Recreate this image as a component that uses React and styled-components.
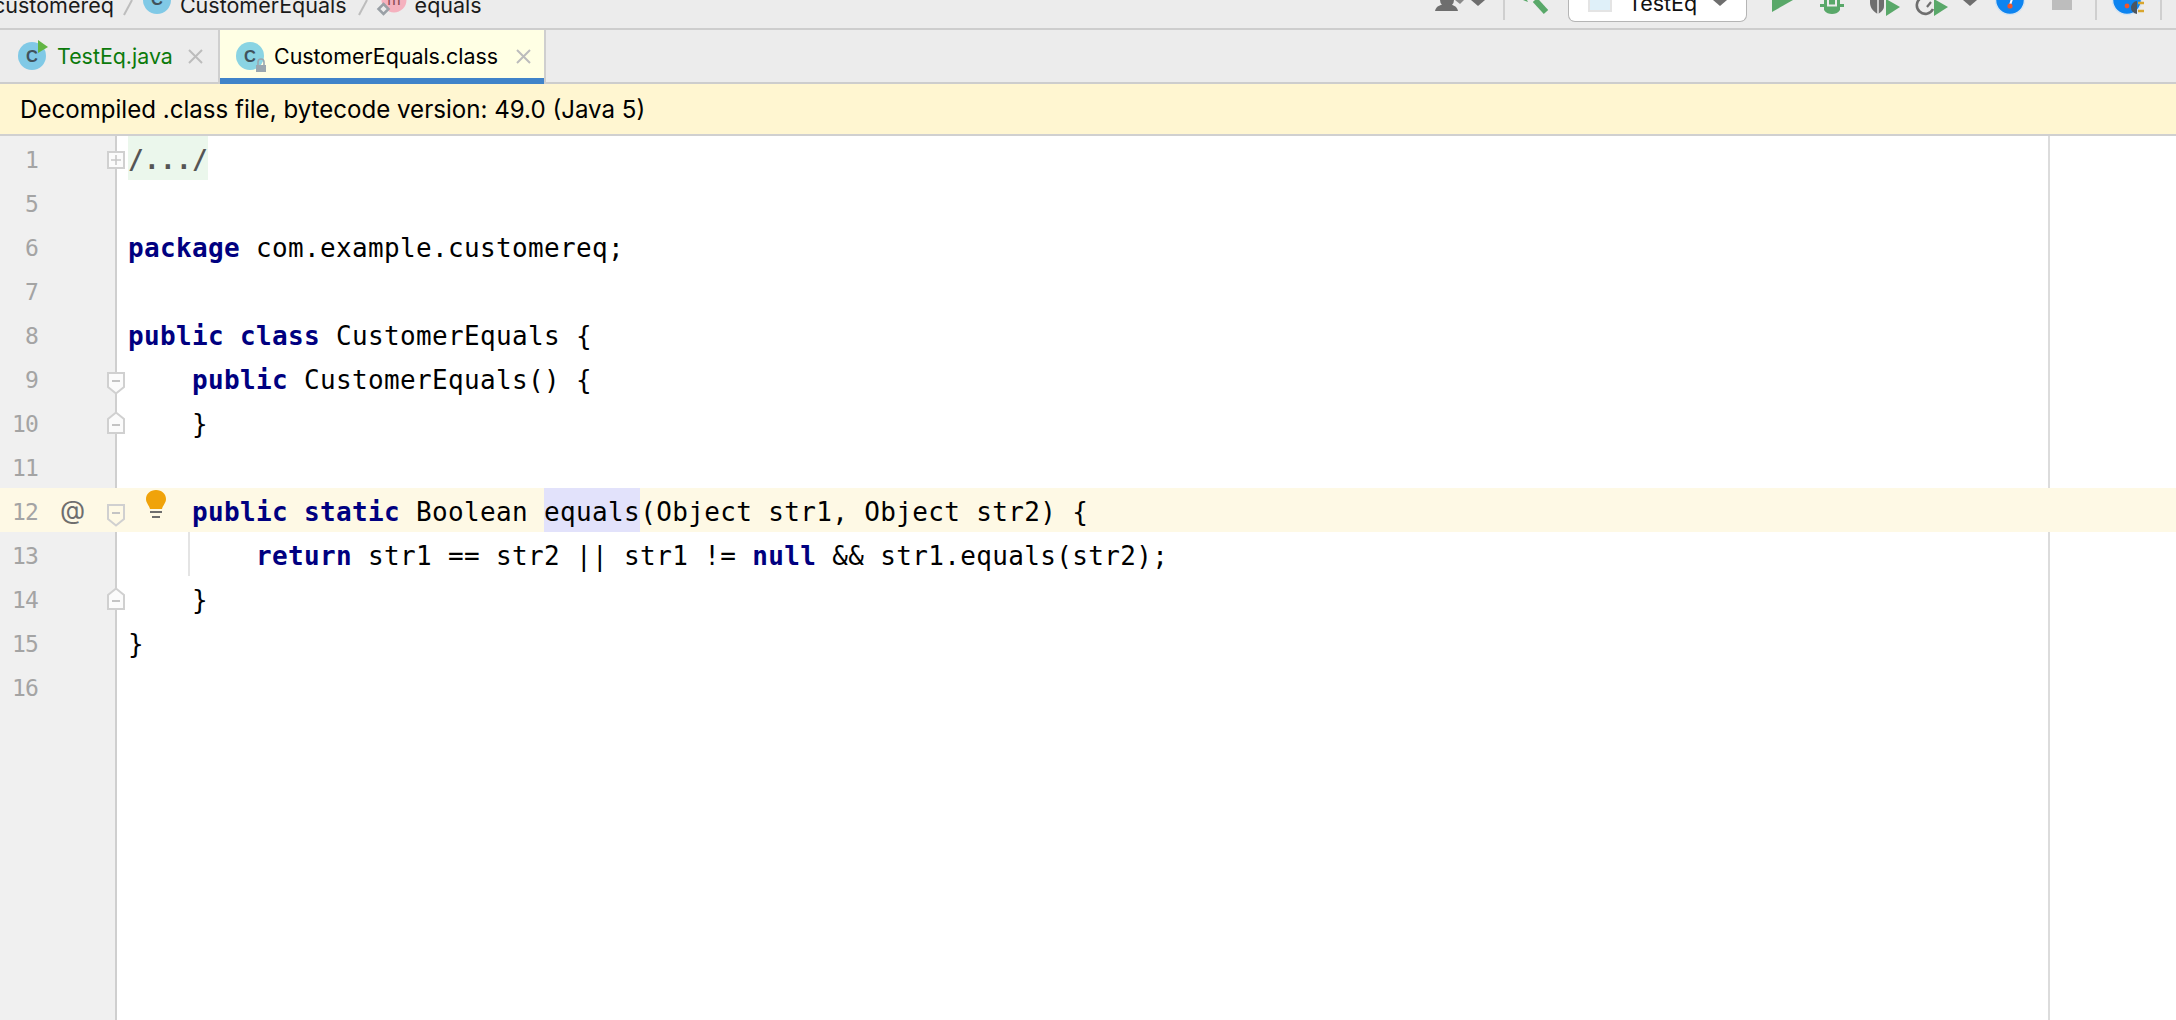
import React from "react";
import styled, { createGlobalStyle } from "styled-components";

const Global = createGlobalStyle`
  html, body { margin: 0; padding: 0; background: #fff; overflow: hidden; }
  #root { width: 2176px; height: 1020px; }
`;
const Page = styled.div`
  width: 2176px; height: 1020px; display: flex; flex-direction: column; overflow: hidden;
  font-family: "Inter", "Liberation Sans", sans-serif; color: #000; background: #fff;
`;
const TopBar = styled.div`
  height: 28px; flex: none; background: #ececec; display: flex; justify-content: space-between;
  align-items: flex-start; overflow: hidden; border-bottom: 2px solid #cdcdcd;
`;
const Crumbs = styled.div`
  display: flex; align-items: flex-start; height: 24px; margin-left: -7px; margin-top: -7px;
  font-size: 21.5px; line-height: 24px; white-space: nowrap; color: #1a1a1a;
`;
const Icon = styled.svg`
  flex: none; display: block; overflow: visible; margin-left: ${p => p.$ml || 0}px; margin-right: ${p => p.$mr || 0}px;
`;
const Tools = styled.div`
  display: flex; align-items: flex-start; height: 28px; padding-right: 14px;
`;
const VSep = styled.span`
  flex: none; width: 2px; height: 20px; background: #cfcfcf; margin-left: ${p => p.$ml}px;
`;
const RunSelect = styled.div`
  box-sizing: border-box; flex: none; width: 179px; height: 22px; margin-left: 18px; background: #fff;
  border: 1px solid #b5b5b5; border-top: none; border-radius: 0 0 7px 7px; display: flex; align-items: flex-start;
  padding-left: 19px; overflow: hidden;
`;
const RunLabel = styled.span`
  margin: -9px 0 0 16px; font-size: 21.5px; line-height: 24px; color: #111;
`;
const TabBar = styled.div`
  height: 54px; flex: none; background: #ececec; display: flex; align-items: stretch;
`;
const Tab = styled.div`
  display: flex; align-items: center; box-sizing: border-box; height: 54px; padding-bottom: 2px;
  width: ${p => p.$w}px; padding-left: ${p => p.$pl}px;
  font-size: 21.4px;
  color: ${p => p.$active ? "#000" : "#0b7a0b"};
  background: ${p => p.$active ? "#ffffe4" : "transparent"};
  border-left: ${p => p.$active ? "2px solid #cfcfcf" : "none"};
  border-right: ${p => p.$active ? "2px solid #cfcfcf" : "none"};
  box-shadow: inset 0 ${p => p.$active ? "-6px 0 #4083c9" : "-2px 0 #cdcdcd"};
`;
const TabName = styled.span`
  margin-left: ${p => p.$ml}px; white-space: nowrap;
`;
const Filler = styled.div`
  flex: 1; box-shadow: inset 0 -2px 0 #cdcdcd;
`;
const Notice = styled.div`
  height: 50px; flex: none; background: #fff6d1; border-bottom: 2px solid #d0d0d0;
  display: flex; align-items: center; padding-left: 20px; font-size: 24.1px;
`;
const Editor = styled.div`
  flex: 1; display: flex; flex-direction: column;
  background:
    linear-gradient(#dcdcdc, #dcdcdc) 2048px 0 / 2px 100% no-repeat,
    linear-gradient(#cfcfcf, #cfcfcf) 115px 0 / 2px 100% no-repeat,
    linear-gradient(#f0f0f0, #f0f0f0) 0 0 / 115px 100% no-repeat,
    #fff;
`;
const Row = styled.div`
  height: 44px; flex: none; display: flex; align-items: flex-start; position: relative;
  background: ${p => p.$caret ? "#fef9e5" : "transparent"};
  font-family: "DejaVu Sans Mono", "Liberation Mono", monospace;
  font-size: 26px; letter-spacing: 0.35px; white-space: pre; line-height: 48px;
`;
const LineNo = styled.span`
  width: 38px; height: 44px; text-align: right; color: #a4a4a4; flex: none; letter-spacing: -0.8px; font-size: 23px;
`;
const Anno = styled.span`
  width: 47px; height: 44px; margin-left: 22px; flex: none; color: #6e6e6e; font-size: 26px; letter-spacing: 0;
  font-family: "Inter", sans-serif; line-height: 44px;
`;
const GutterSlot = styled.span`
  width: 18px; height: 44px; display: flex; justify-content: center; align-items: center; flex: none;
  padding-top: ${p => p.$down || 0}px; box-sizing: border-box;
`;
const BulbMark = styled.svg`
  position: absolute; left: 146px; top: 2px;
`;
const IndentGuide = styled.span`
  position: absolute; left: 188px; top: 0; width: 2px; height: 44px; background: #e4e4e4;
`;
const Code = styled.span`
  margin-left: 3px; height: 44px; color: #000;
`;
const Kw = styled.b`
  color: #000080; font-weight: 700;
`;
const Fold = styled.span`
  display: inline-block; background: #ebf7ec; color: #555; font-weight: 700; height: 44px;
`;
const Usage = styled.span`
  display: inline-block; background: #e2e2fb; height: 44px;
`;

const ClassIcon = ({ run, lock }) => (
  <Icon width="32" height="34" viewBox="0 0 32 34">
    <circle cx="14" cy="17" r="14" fill={lock ? "#8ad4e3" : "#80c9e6"} />
    <text x="14" y="23" fontSize="16.5" fontFamily="Liberation Sans" fontWeight="700" textAnchor="middle" fill="#40525c">C</text>
    {run && <path d="M20 1 L30 8 L20 14 Z" fill="#62b543" />}
    {lock && <g><path d="M22 26 v-3 a3 3 0 0 1 6 0 v3" fill="none" stroke="#9aa7b0" strokeWidth="1.6" /><rect x="20" y="26" width="10" height="7" fill="#9aa7b0" /></g>}
  </Icon>
);
const X = ({ ml }) => (
  <Icon $ml={ml} width="15" height="15" viewBox="0 0 15 15">
    <path d="M1 1 L14 14 M14 1 L1 14" stroke="#bcbcbc" strokeWidth="2" />
  </Icon>
);
const FoldTop = ({ fill }) => (
  <Icon width="18" height="23" viewBox="0 0 18 23">
    <path d="M1 1 H17 V15 L9 21.5 L1 15 Z" fill={fill} stroke="#d0d0d0" strokeWidth="2" />
    <path d="M5 9 H13" stroke="#c4c4c4" strokeWidth="2" />
  </Icon>
);
const FoldEnd = ({ fill }) => (
  <Icon width="18" height="23" viewBox="0 0 18 23">
    <path d="M1 22 H17 V8 L9 1.5 L1 8 Z" fill={fill} stroke="#d0d0d0" strokeWidth="2" />
    <path d="M5 14 H13" stroke="#c4c4c4" strokeWidth="2" />
  </Icon>
);
const FoldPlus = () => (
  <Icon width="18" height="18" viewBox="0 0 18 18">
    <rect x="1" y="1" width="16" height="16" fill="#fbfbfb" stroke="#d0d0d0" strokeWidth="2" />
    <path d="M4 9 H14 M9 4 V14" stroke="#c8c8c8" strokeWidth="1.6" />
  </Icon>
);
const Caret = ({ ml }) => (
  <Icon $ml={ml} width="14" height="6" viewBox="0 0 14 6">
    <path d="M0 0 H14 L7 6 Z" fill="#6e6e6e" />
  </Icon>
);

const rows = [
  { n: 1, g: <FoldPlus />, down: 4, c: <Fold>/.../</Fold> },
  { n: 5 },
  { n: 6, c: <><Kw>package</Kw> com.example.customereq;</> },
  { n: 7 },
  { n: 8, c: <><Kw>public class</Kw> CustomerEquals {"{"}</> },
  { n: 9, g: <FoldTop fill="#fbfbfb" />, down: 10, c: <>{"    "}<Kw>public</Kw> CustomerEquals() {"{"}</> },
  { n: 10, g: <FoldEnd fill="#fbfbfb" />, c: <>{"    }"}</> },
  { n: 11 },
  { n: 12, caret: true, anno: "@", g: <FoldTop fill="#fef9e5" />, down: 10, bulb: true, c: <>{"    "}<Kw>public static</Kw> Boolean <Usage>equals</Usage>(Object str1, Object str2) {"{"}</> },
  { n: 13, guide: true, c: <>{"        "}<Kw>return</Kw> str1 == str2 || str1 != <Kw>null</Kw> &amp;&amp; str1.equals(str2);</> },
  { n: 14, g: <FoldEnd fill="#fbfbfb" />, c: <>{"    }"}</> },
  { n: 15, c: "}" },
  { n: 16 },
];

export default function App() {
  return (
    <Page>
      <Global />
      <TopBar>
        <Crumbs>
          <span>customereq</span>
          <Icon $ml={9} $mr={10} width="10" height="23" viewBox="0 0 10 23"><path d="M9 7 L1 22" stroke="#bdbdbd" strokeWidth="2" /></Icon>
          <Icon $mr={9} width="28" height="21" viewBox="0 0 28 21">
            <circle cx="14" cy="7" r="14" fill="#80c9e6" />
            <text x="14" y="12" fontSize="16.5" fontFamily="Liberation Sans" fontWeight="700" textAnchor="middle" fill="#40525c">C</text>
          </Icon>
          <span>CustomerEquals</span>
          <Icon $ml={11} $mr={9} width="10" height="23" viewBox="0 0 10 23"><path d="M9 7 L1 22" stroke="#bdbdbd" strokeWidth="2" /></Icon>
          <Icon $mr={9} width="29" height="21" viewBox="0 0 29 21">
            <circle cx="17" cy="7" r="12.5" fill="#f5b1be" />
            <text x="17" y="12" fontSize="16" fontFamily="Liberation Sans" textAnchor="middle" fill="#8a4a55">m</text>
            <path d="M6.5 11 L11.5 16 L6.5 21 L1.5 16 Z" fill="#ececec" stroke="#9aa0a6" strokeWidth="2.5" />
          </Icon>
          <span>equals</span>
        </Crumbs>
        <Tools>
          <Icon width="29" height="11" viewBox="0 0 29 11">
            <circle cx="12" cy="0" r="7" fill="#6e6e6e" />
            <path d="M0 11 C1 6 6 4 12 4 C17 4 22 6 23 11 Z" fill="#6e6e6e" />
            <path d="M20 0 L29 0 L25 4 Z" fill="#8a8a8a" />
          </Icon>
          <Caret ml={7} />
          <VSep $ml={18} />
          <Icon $ml={18} width="27" height="14" viewBox="0 0 27 14">
            <path d="M0 0 L4 0 L5 2 Z" fill="#59a869" />
            <path d="M12 0 L23 12" stroke="#59a869" strokeWidth="6" />
          </Icon>
          <RunSelect>
            <Icon width="24" height="12" viewBox="0 0 24 12">
              <rect x="1" y="-6" width="22" height="17" fill="#dff0f9" stroke="#e4e4e4" strokeWidth="2" />
            </Icon>
            <RunLabel>TestEq</RunLabel>
            <Caret ml={16} />
          </RunSelect>
          <Icon $ml={25} width="21" height="12" viewBox="0 0 21 12">
            <path d="M0 -4 L21 0 L0 12 Z" fill="#59a869" />
          </Icon>
          <Icon $ml={27} width="24" height="14" viewBox="0 0 24 14">
            <path d="M4 0 H20 V4 H24 V7 H20 V10 C18 13 15 14 12 14 C9 14 6 13 4 10 V7 H0 V4 H4 Z" fill="#59a869" />
            <path d="M8 0 V5 M16 0 V5 M7 5.5 H17" stroke="#ececec" strokeWidth="2" />
          </Icon>
          <Icon $ml={26} width="30" height="16" viewBox="0 0 30 16">
            <path d="M0 0 H14 V6 C14 10 11 12 8 14 C4 12 0 8 0 3 Z" fill="#6e6e6e" />
            <path d="M8 0 V14" stroke="#ececec" strokeWidth="1.5" />
            <path d="M16 -1 L30 7 L16 16 Z" fill="#59a869" />
          </Icon>
          <Icon $ml={18} width="30" height="16" viewBox="0 0 30 16">
            <path d="M3 -2 A8.5 8.5 0 1 0 15 9" fill="none" stroke="#6e6e6e" strokeWidth="2.6" />
            <path d="M9 7 L13 2" stroke="#6e6e6e" strokeWidth="2.2" />
            <path d="M16 -1 L30 7 L16 16 Z" fill="#59a869" />
          </Icon>
          <Caret ml={15} />
          <Icon $ml={18} width="30" height="15" viewBox="0 0 30 15">
            <circle cx="15" cy="0" r="14.5" fill="#0d84f0" stroke="#d5e4f2" strokeWidth="1.5" />
            <path d="M18 -4 L15 5" stroke="#fff" strokeWidth="2" />
            <circle cx="15" cy="6" r="2.6" fill="#f0562b" />
          </Icon>
          <Icon $ml={27} width="20" height="10" viewBox="0 0 20 10">
            <rect x="0" y="0" width="20" height="10" fill="#bdbdbd" />
          </Icon>
          <VSep $ml={23} />
          <Icon $ml={16} width="31" height="15" viewBox="0 0 31 15">
            <circle cx="14" cy="0" r="14.5" fill="#0d84f0" stroke="#d5e4f2" strokeWidth="1.5" />
            <circle cx="14" cy="6" r="2.4" fill="#f0562b" />
            <path d="M18 7 A6.5 6.5 0 0 1 24 1 V14 A6.5 6.5 0 0 1 18 7 Z" fill="#4a5560" />
            <path d="M25 3 H31 M25 11 H31" stroke="#d9a62e" strokeWidth="2.4" />
          </Icon>
          <VSep $ml={16} />
        </Tools>
      </TopBar>
      <TabBar>
        <Tab $w={218} $pl={18}>
          <ClassIcon run />
          <TabName $ml={7}>TestEq.java</TabName>
          <X ml={15} />
        </Tab>
        <Tab $active $w={328} $pl={16}>
          <ClassIcon lock />
          <TabName $ml={6}>CustomerEquals.class</TabName>
          <X ml={18} />
        </Tab>
        <Filler />
      </TabBar>
      <Notice>Decompiled .class file, bytecode version: 49.0 (Java 5)</Notice>
      <Editor>
        {rows.map(r => (
          <Row key={r.n} $caret={r.caret}>
            <LineNo>{r.n}</LineNo>
            <Anno>{r.anno}</Anno>
            <GutterSlot $down={r.down}>{r.g}</GutterSlot>
            <Code>{r.c}</Code>
            {r.guide && <IndentGuide />}
            {r.bulb && (
              <BulbMark width="20" height="28" viewBox="0 0 20 28">
                <path d="M10 0 C4 0 0 4 0 9 C0 13 3 15 4 19 H16 C17 15 20 13 20 9 C20 4 16 0 10 0 Z" fill="#f0a30a" />
                <path d="M4 22 H16 M6 27 H14" stroke="#6e6e6e" strokeWidth="2" />
              </BulbMark>
            )}
          </Row>
        ))}
      </Editor>
    </Page>
  );
}
